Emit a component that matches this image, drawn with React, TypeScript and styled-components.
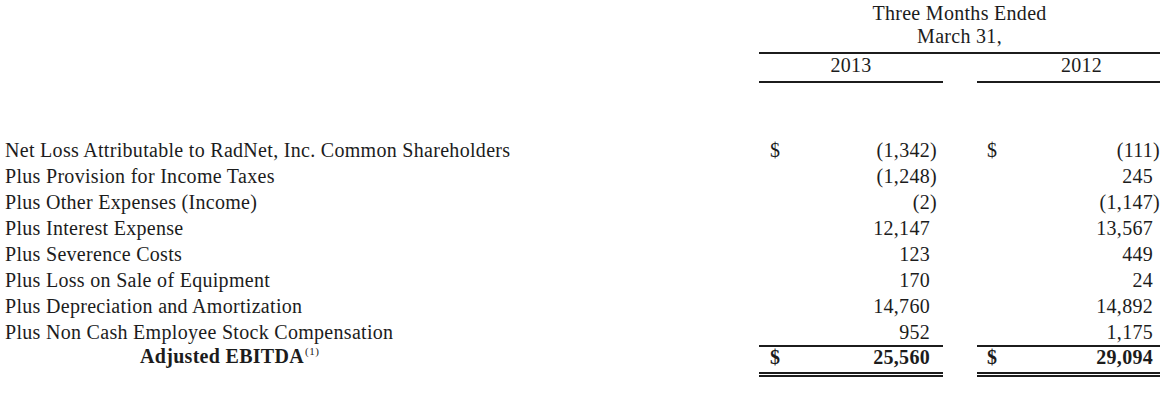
import React from 'react';
import styled, { createGlobalStyle } from 'styled-components';

const GlobalStyle = createGlobalStyle`
  html, body {
    margin: 0;
    padding: 0;
    background: #fff;
  }
  body {
    font-family: "Liberation Serif", "Times New Roman", serif;
    color: #1c1c1c;
  }
`;

const Sheet = styled.table`
  border-collapse: separate;
  border-spacing: 0;
  table-layout: fixed;
  width: 1160px;
  font-size: 20px;
  letter-spacing: 0.3px;
`;

const HeadCell = styled.td`
  text-align: center;
  line-height: 23px;
  padding: 2px 0 4px;
  border-bottom: 2px solid #1c1c1c;
`;

const YearCell = styled.td<{ $shift?: number }>`
  text-align: center;
  line-height: 23px;
  padding: 0 0 4px ${(p) => p.$shift || 0}px;
  border-bottom: 2px solid #1c1c1c;
`;

const Spacer = styled.td`
  height: 54px;
  padding: 0;
`;

const Label = styled.td`
  line-height: 26px;
  padding: 0 0 0 5px;
  white-space: nowrap;
`;

const TotalLabel = styled.td`
  line-height: 22px;
  padding: 0 0 0 140px;
  font-weight: bold;
  white-space: nowrap;
  vertical-align: top;
`;

const Note = styled.sup`
  font-size: 11px;
  font-weight: normal;
  letter-spacing: 0.5px;
  margin-left: 1px;
  line-height: 0;
`;

const MoneyCell = styled.td`
  padding: 0;
  line-height: 26px;
`;

const TotalCell = styled.td`
  padding: 0 0 5px;
  line-height: 20px;
  font-weight: bold;
  border-top: 2px solid #1c1c1c;
  border-bottom: 5px double #1c1c1c;
  vertical-align: top;
`;

const MoneyBox = styled.div<{ $inset: number; $end: number }>`
  display: flex;
  justify-content: space-between;
  padding: 0 ${(p) => p.$end}px 0 ${(p) => p.$inset}px;
  white-space: nowrap;
`;

const Paren = styled.span`
  visibility: hidden;
`;

type Line = { label: string; a: string; b: string; dollar?: boolean };

const lines: Line[] = [
  { label: 'Net Loss Attributable to RadNet, Inc. Common Shareholders', a: '(1,342)', b: '(111)', dollar: true },
  { label: 'Plus Provision for Income Taxes', a: '(1,248)', b: '245' },
  { label: 'Plus Other Expenses (Income)', a: '(2)', b: '(1,147)' },
  { label: 'Plus Interest Expense', a: '12,147', b: '13,567' },
  { label: 'Plus Severence Costs', a: '123', b: '449' },
  { label: 'Plus Loss on Sale of Equipment', a: '170', b: '24' },
  { label: 'Plus Depreciation and Amortization', a: '14,760', b: '14,892' },
  { label: 'Plus Non Cash Employee Stock Compensation', a: '952', b: '1,175' },
];

const Amount = ({ value }: { value: string }) => (
  <span>
    {value}
    {!value.endsWith(')') && <Paren>)</Paren>}
  </span>
);

const cols = {
  a: { inset: 11, end: 6 },
  b: { inset: 10, end: 0 },
};

export default function App() {
  return (
    <>
      <GlobalStyle />
      <Sheet>
        <colgroup>
          <col style={{ width: 759 }} />
          <col style={{ width: 184 }} />
          <col style={{ width: 34 }} />
          <col style={{ width: 183 }} />
        </colgroup>
        <tbody>
          <tr>
            <td />
            <HeadCell colSpan={3}>
              Three Months Ended
              <br />
              March 31,
            </HeadCell>
          </tr>
          <tr>
            <td />
            <YearCell>2013</YearCell>
            <td />
            <YearCell $shift={26}>2012</YearCell>
          </tr>
          <tr>
            <Spacer colSpan={4} />
          </tr>
          {lines.map((l) => (
            <tr key={l.label}>
              <Label>{l.label}</Label>
              <MoneyCell>
                <MoneyBox $inset={cols.a.inset} $end={cols.a.end}>
                  <span>{l.dollar ? '$' : ''}</span>
                  <Amount value={l.a} />
                </MoneyBox>
              </MoneyCell>
              <td />
              <MoneyCell>
                <MoneyBox $inset={cols.b.inset} $end={cols.b.end}>
                  <span>{l.dollar ? '$' : ''}</span>
                  <Amount value={l.b} />
                </MoneyBox>
              </MoneyCell>
            </tr>
          ))}
          <tr>
            <TotalLabel>
              Adjusted EBITDA<Note>(1)</Note>
            </TotalLabel>
            <TotalCell>
              <MoneyBox $inset={cols.a.inset} $end={cols.a.end}>
                <span>$</span>
                <Amount value="25,560" />
              </MoneyBox>
            </TotalCell>
            <td />
            <TotalCell>
              <MoneyBox $inset={cols.b.inset} $end={cols.b.end}>
                <span>$</span>
                <Amount value="29,094" />
              </MoneyBox>
            </TotalCell>
          </tr>
        </tbody>
      </Sheet>
    </>
  );
}
